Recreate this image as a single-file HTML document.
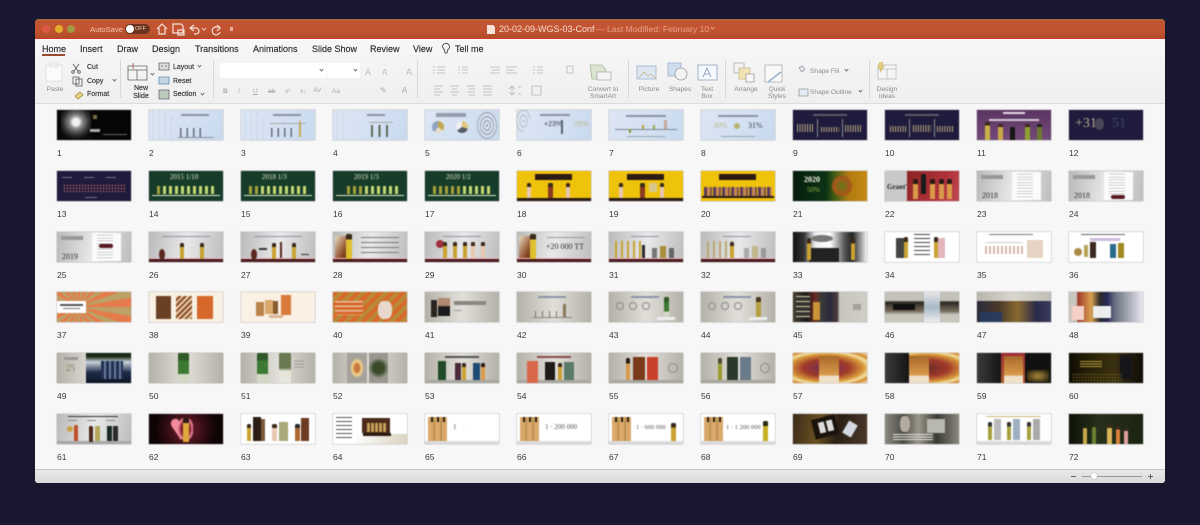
<!DOCTYPE html>
<html><head><meta charset="utf-8"><style>
*{box-sizing:border-box}
html,body{margin:0;padding:0;width:1200px;height:525px;overflow:hidden;background:#191630;font-family:"Liberation Sans",sans-serif}
#w{position:absolute;left:35px;top:19px;width:1130px;height:464px;background:#f7f7f7;border-radius:4px 4px 3px 3px;overflow:hidden}
#tb{position:absolute;left:0;top:0;width:100%;height:20px;background:linear-gradient(#b0703a 0,#bf5431 2px,#c55433 10px,#b04e29 19px);border-bottom:1px solid #d43a2a}
#rb{position:absolute;left:0;top:20px;width:100%;height:65px;background:linear-gradient(#f7f7f7,#efefef);border-bottom:1px solid #dcdcdc}
#sb{position:absolute;left:0;top:450px;width:100%;height:14px;background:linear-gradient(#e9e9e9,#d8d8d8);border-top:1px solid #c6c6c6}
.a{position:absolute;white-space:nowrap}
.tab{position:absolute;top:25px;font-size:9px;line-height:11px;color:#2a2a2a;white-space:nowrap;-webkit-text-stroke:.15px #2a2a2a}
.l{position:absolute;margin-top:1px;font-size:7px;line-height:8px;color:#333;white-space:nowrap;font-weight:400;-webkit-text-stroke:.15px #333}
.m{position:absolute;margin-top:1.5px;font-size:6.6px;line-height:7.6px;color:#8a8a8a;text-align:center;white-space:nowrap;transform:translateX(-50%)}
.n{position:absolute;margin-top:1.5px;font-size:6.6px;line-height:8px;color:#8a8a8a;white-space:nowrap}
.sp{position:absolute;top:41px;width:1px;height:38px;background:#d8d8d8}
.ch{position:absolute;width:3px;height:3px;border-right:1px solid #777;border-bottom:1px solid #777;transform:rotate(45deg)}
svg{position:absolute;overflow:visible}
#g{position:absolute;left:22px;top:91px;display:grid;grid-template-columns:repeat(12,74px);column-gap:18px;grid-auto-rows:60.8px}
.c{position:relative}
.c p{position:absolute;left:0;top:38px;margin:0;font-size:8.5px;line-height:11px;color:#3a3a3a}
.t{position:relative;width:74px;height:30px;overflow:hidden;box-shadow:0 0 0 .5px #bdbdbd;background:#ddd;filter:blur(.45px)}
.t i{position:absolute;display:block}
.t b{position:absolute;font-weight:400;white-space:nowrap;line-height:1}
.bl{background:linear-gradient(120deg,#dde6f4,#d2e0f2 60%,#c7d9ef)}
.nv{background:#1e1b3d}
.gr{background:#173d2a}
.ye{background:#efc20c}
.sl{background:linear-gradient(100deg,#b9b9b9,#e9e9e9 50%,#bdbdbd)}
.bg{background:linear-gradient(90deg,#b4b1a8,#e2dfda 50%,#b4b1a8)}
.wh{background:#fff}
.st{left:0;top:26px;width:74px;height:4px;background:#4a1a1f;border-top:1px solid #f0b9c4}
.bt{left:0;top:27px;width:74px;height:3px;background:#dcdcdc}
.cv{left:0;top:0;width:26px;height:30px;background:repeating-linear-gradient(90deg,transparent 0 4px,#b6c4d6 4px 4.6px,transparent 4.6px 6px);opacity:.8;border-radius:0 60% 0 0}
.ti{left:26px;top:4px;width:28px;height:1.5px;background:#8b93a5}
.b{width:3.5px;height:16px;top:9px;border-radius:1.5px 1.5px 0 0;background:linear-gradient(#3a2a1a 0 25%,#c9a232 25% 100%)}
.bg_{background:linear-gradient(#2e5a2a 0 25%,#3c7a33 25% 70%,#d3d8c4 70%)}
.bm{background:linear-gradient(#2a1a12 0 25%,#d99a4a 25% 100%)}
.bk{background:linear-gradient(#1a1a1a 0 100%)}
.bp{background:linear-gradient(#3a2a1a 0 25%,#e8c8b0 25% 100%)}
</style></head><body>
<div id="w">
<div id="tb">
<span class="a" style="left:7px;top:6px;width:8px;height:8px;border-radius:50%;background:#dc5a46"></span>
<span class="a" style="left:20px;top:6px;width:8px;height:8px;border-radius:50%;background:#e5ac2c"></span>
<span class="a" style="left:32px;top:6px;width:8px;height:8px;border-radius:50%;background:#9f9a40"></span>
<span class="a" style="left:55px;top:4.500px;font-size:7.6px;line-height:11px;color:#f0c4ae">AutoSave</span>
<span class="a" style="left:90px;top:5px;width:25px;height:10px;border-radius:5px;background:#6a3420"></span>
<span class="a" style="left:91px;top:6px;width:8px;height:8px;border-radius:50%;background:#fff"></span>
<span class="a" style="left:100px;top:7px;font-size:5.5px;line-height:6px;color:#f0d0c0">OFF</span>
<svg style="left:0;top:0" width="240" height="20" fill="none" stroke="#f6e3d9" stroke-width="1.2"><path d="M122 10l5-5 5 5M124 9v6h6V9"/><path d="M138 5h8l2 2v7h-10zM143 11h6v5h-6z"/><path d="M159 6l-4 3 4 3M155 9h6a3 3 0 0 1 0 6h-2"/><path d="M167 9l2 2 2-2" stroke-width=".8"/><path d="M182 6l3 3-3 3M185 8h-3a4 4 0 1 0 3 5"/><path d="M195 9h3M195 11h3"/></svg>
<svg style="left:0;top:0" width="470" height="20"><path d="M452 6h6l2 2v7h-8z" fill="#f6e3d9"/></svg>
<span class="a" style="left:464px;top:4px;font-size:9px;line-height:12px;color:#f5ddd0">20-02-09-WGS-03-Conf</span>
<span class="a" style="left:561px;top:4px;font-size:8.600px;line-height:12px;color:#e7a088">— Last Modified: February 10</span>
<span class="ch" style="left:676px;top:7px;border-color:#e7a088"></span>
</div>
<div id="rb"></div>
<span class="tab" style="left:7px">Home</span><span class="a" style="left:7px;top:35px;width:23px;height:1.5px;background:#9a4a30"></span>
<span class="tab" style="left:45px">Insert</span><span class="tab" style="left:82px">Draw</span><span class="tab" style="left:117px">Design</span><span class="tab" style="left:160px">Transitions</span><span class="tab" style="left:218px">Animations</span><span class="tab" style="left:277px">Slide Show</span><span class="tab" style="left:335px">Review</span><span class="tab" style="left:378px">View</span><span class="tab" style="left:420px">Tell me</span>
<svg style="left:0;top:0" width="1130" height="85" fill="none" stroke="#8d8d8d" stroke-width=".8">
<path d="M407.500 28a3.500 3.500 0 1 1 5 3l-.5 3h-2l-.5-3z" stroke="#333"/>
<path d="M11 46h16v16H11zM15 44h8v4h-8z" stroke="#d8d8d8" fill="#fbfbfb"/>
<path d="M38 45l5 7M44 45l-5 7" stroke="#555"/><circle cx="38" cy="53" r="1.300" stroke="#555"/><circle cx="44" cy="53" r="1.300" stroke="#555"/>
<path d="M38 58h6v7h-6zM41 60h6v7h-6z" stroke="#555"/><path d="M40 77l5-4 3 3-5 4z" stroke="#a5843a" fill="#e8d28a"/>
<path d="M93 47h19v14H93zM93 51h19M102 51v10" stroke="#666"/><path d="M98 44v6" stroke="#a5483a"/>
<path d="M124 44h10v7h-10zM126 47h2M130 47h2" stroke="#666" fill="#ddd"/><path d="M124 58h10v7h-10z" stroke="#6688aa" fill="#c8d6e2"/><path d="M124 71h10v9h-10z" stroke="#667" fill="#bccabb"/>
<path d="M398 48h2M402 48h8M398 51h2M402 51h8M398 54h2M402 54h8M423 48h2M427 48h6M423 51h2M427 51h6M423 54h2M427 54h6M455 48h10M457 51h8M455 54h10M471 48h11M471 51h8M471 54h11M498 48h2M502 48h6M498 51h2M502 51h6M498 54h2M502 54h6M532 47h6v7h-6z" stroke="#b5b5b5"/>
<path d="M399 67h9M399 70h6M399 73h9M399 76h6M415 67h9M417 70h5M415 73h9M417 76h5M432 67h8M434 70h6M432 73h8M434 76h6M448 67h9M448 70h9M448 73h9M448 76h9" stroke="#b5b5b5"/>
<path d="M477 67v9M474 70l3-3 3 3M474 73l3 3 3-3M483 68h3M483 75h3M497 67h9v9h-9z" stroke="#b5b5b5"/>
<path d="M555 46h12l4 5v9h-14z" stroke="#a9b99a" fill="#dbe4cf"/><path d="M562 53h14v8h-14z" stroke="#aaa" fill="#f4f4f4"/>
<path d="M602 47h19v13h-19z" stroke="#9ab1cc" fill="#dde7f2"/><path d="M604 59l5-6 4 4 3-2 5 5" stroke="#c7b790"/>
<path d="M633 44h13v13h-13z" stroke="#9ab1cc" fill="#cfdcf0"/><circle cx="646" cy="55" r="6" stroke="#999" fill="#f3f3f3"/>
<path d="M663 46h19v15h-19z" stroke="#8aa0bd" fill="#f5f8fc"/><path d="M668 58l4-9 4 9M669 55h6" stroke="#7e95b3"/>
<path d="M699 44h10v10h-10z" stroke="#aaa"/><path d="M704 49h11v11h-11z" stroke="#c9b58a" fill="#f3e4b6"/><path d="M711 55h8v8h-8z" stroke="#999" fill="#f7f7f7"/>
<path d="M730 46h17v17h-17z" stroke="#aaa" fill="#f8f8f8"/><path d="M733 63l13-10" stroke="#9ab1cc" stroke-width="1.600"/>
<path d="M764 49l3-2 3 3-3 3zM764 70h9v7h-9z" stroke="#999" fill="#e4ecf5"/>
<path d="M843 46h18v14h-18zM843 50h18M852 50v10" stroke="#bbb" fill="#f5f5f5"/><path d="M845 43l-2 6h3l-1 4 4-6h-3l2-4" stroke="#d3b75c" fill="#e9d58b"/>
</svg>
<span class="m" style="left:20px;top:65px">Paste</span>
<span class="l" style="left:52px;top:44px">Cut</span><span class="l" style="left:52px;top:58px">Copy</span><span class="ch" style="left:78px;top:59px"></span><span class="l" style="left:52px;top:71px">Format</span>
<span class="sp" style="left:85px"></span>
<span class="ch" style="left:116px;top:53px"></span>
<span class="l" style="left:106px;top:65px;transform:translateX(-50%)">New</span><span class="l" style="left:106px;top:73px;transform:translateX(-50%)">Slide</span>
<span class="l" style="left:138px;top:44px">Layout</span><span class="ch" style="left:163px;top:45px"></span><span class="l" style="left:138px;top:58px">Reset</span><span class="l" style="left:138px;top:71px">Section</span><span class="ch" style="left:166px;top:73px"></span>
<span class="sp" style="left:178px"></span>
<span class="a" style="left:185px;top:44px;width:106px;height:15px;background:#fff;border-radius:2px"></span><span class="ch" style="left:285px;top:49px"></span>
<span class="a" style="left:292px;top:44px;width:33px;height:15px;background:#fff;border-radius:2px"></span><span class="ch" style="left:319px;top:49px"></span>
<span class="n" style="left:330px;top:47px;font-size:9px;color:#bbb">A</span><span class="n" style="left:347px;top:48px;font-size:8px;color:#bbb">A</span><span class="n" style="left:371px;top:47px;font-size:9px;color:#bbb">A</span>
<span class="n" style="left:188px;top:67px;color:#aaa;font-weight:700">B</span><span class="n" style="left:203px;top:67px;color:#aaa;font-style:italic">I</span><span class="n" style="left:218px;top:67px;color:#aaa;text-decoration:underline">U</span><span class="n" style="left:233px;top:67px;color:#aaa;text-decoration:line-through">ab</span><span class="n" style="left:250px;top:67px;color:#aaa">x²</span><span class="n" style="left:265px;top:67px;color:#aaa">x₂</span><span class="n" style="left:278px;top:66px;color:#aaa">AV</span><span class="n" style="left:297px;top:67px;color:#aaa">Aa</span><span class="n" style="left:345px;top:66px;color:#aaa;font-size:8px">✎</span><span class="n" style="left:367px;top:66px;color:#aaa;font-size:8px">A</span>
<span class="sp" style="left:382px"></span><span class="sp" style="left:593px"></span><span class="sp" style="left:690px"></span><span class="sp" style="left:834px"></span>
<span class="m" style="left:568px;top:65px">Convert to<br>SmartArt</span>
<span class="m" style="left:614px;top:65px">Picture</span><span class="m" style="left:645px;top:65px">Shapes</span><span class="m" style="left:672px;top:65px">Text<br>Box</span>
<span class="m" style="left:711px;top:65px">Arrange</span><span class="m" style="left:742px;top:65px">Quick<br>Styles</span>
<span class="n" style="left:775px;top:47px">Shape Fill</span><span class="ch" style="left:810px;top:49px"></span><span class="n" style="left:775px;top:68px">Shape Outline</span><span class="ch" style="left:824px;top:70px"></span>
<span class="m" style="left:852px;top:65px">Design<br>Ideas</span>
<div id="g">
<div class="c"><div class="t" style="background:#060606"><i style="left:4px;top:0;width:30px;height:30px;background:radial-gradient(circle at 50% 40%,#f2f2f2 0 14%,#888 28%,#333 55%,#0a0a0a 75%)"></i><i style="left:36px;top:5px;width:4px;height:4px;background:#7a6a4a"></i><i style="left:33px;top:19px;width:10px;height:3px;background:#aaa"></i><i style="left:46px;top:24px;width:24px;height:1px;background:#666"></i></div><p>1</p></div>
<div class="c"><div class="t bl"><i class="cv"></i><i class="ti" style="left:32px"></i><i style="left:31px;top:18px;width:24px;height:9px;background:repeating-linear-gradient(90deg,#666d79 0 1.500px,transparent 1.500px 6.500px)"></i><i style="left:29px;top:27px;width:36px;height:.6px;background:#8a90a0"></i></div><p>2</p></div>
<div class="c"><div class="t bl"><i class="cv"></i><i class="ti" style="left:32px"></i><i style="left:30px;top:18px;width:26px;height:9px;background:repeating-linear-gradient(90deg,#666d79 0 1.500px,transparent 1.500px 6.500px)"></i><i style="left:58px;top:11px;width:2px;height:16px;background:#c0ab58"></i><i style="left:29px;top:13px;width:36px;height:.6px;background:#aaa"></i></div><p>3</p></div>
<div class="c"><div class="t bl"><i class="cv" style="width:16px"></i><i class="ti" style="left:34px;width:18px"></i><i style="left:38px;top:15px;width:20px;height:12px;background:repeating-linear-gradient(90deg,#5c6a58 0 2px,transparent 2px 7.500px)"></i><i style="left:36px;top:12px;width:24px;height:.6px;background:#aaa"></i></div><p>4</p></div>
<div class="c"><div class="t bl"><i style="left:7px;top:11px;width:12px;height:12px;border-radius:50%;background:conic-gradient(#c2a94f 0 35%,#e5e0c8 35% 60%,#8ea3bf 60%)"></i><i style="left:31px;top:11px;width:12px;height:12px;border-radius:50%;background:conic-gradient(#e0c77c 0 30%,#555d68 30% 65%,#eee 65%)"></i><i style="left:11px;top:3px;width:30px;height:4px;background:#969cab"></i><i style="left:52px;top:2px;width:20px;height:27px;border-radius:50%;background:repeating-radial-gradient(#9ca6b5 0 1px,#d6e0ee 1px 3px)"></i></div><p>5</p></div>
<div class="c"><div class="t bl"><i style="left:0;top:0;width:13px;height:22px;border-radius:0 0 60% 0;background:repeating-radial-gradient(#bcc6d4 0 1px,#dbe4f0 1px 3px)"></i><b style="left:27px;top:11px;font-size:7px;color:#3a4252">+23%</b><b style="left:55px;top:11px;font-size:7px;color:#b6b98a">·26%</b><i style="left:44px;top:10px;width:1.500px;height:14px;background:#5a6472"></i><i style="left:23px;top:4px;width:30px;height:1.500px;background:#8b93a5"></i></div><p>6</p></div>
<div class="c"><div class="t bl"><i class="ti" style="left:17px;width:40px;top:5px"></i><i style="left:6px;top:19px;width:62px;height:.7px;background:#7a8a9a"></i><i style="left:20px;top:19px;width:2px;height:4px;background:#8a9a30"></i><i style="left:33px;top:15px;width:2px;height:4px;background:#b8a040"></i><i style="left:44px;top:15px;width:2px;height:4px;background:#9aaa40"></i><i style="left:55px;top:10px;width:3px;height:9px;background:#c9a79a"></i><i style="left:18px;top:26px;width:38px;height:.6px;background:#9aa"></i></div><p>7</p></div>
<div class="c"><div class="t bl"><i class="ti" style="left:17px;width:40px;top:5px"></i><b style="left:12px;top:12px;font-size:8px;font-family:'Liberation Serif',serif;color:#bdb986">30%</b><b style="left:47px;top:12px;font-size:8px;font-family:'Liberation Serif',serif;color:#3a4252">31%</b><i style="left:33px;top:13px;width:6px;height:6px;background:#b8b272;border-radius:50%"></i><i style="left:20px;top:26px;width:34px;height:.6px;background:#9aa"></i></div><p>8</p></div>
<div class="c"><div class="t nv"><i class="ti" style="left:20px;width:34px;top:4px;background:#5c5866"></i><i style="left:4px;top:14px;width:16px;height:8px;background:repeating-linear-gradient(90deg,#b8a478 0 1px,transparent 1px 2.500px)"></i><i style="left:28px;top:17px;width:18px;height:5px;background:repeating-linear-gradient(90deg,#b8a478 0 1px,transparent 1px 2.500px)"></i><i style="left:52px;top:15px;width:17px;height:7px;background:repeating-linear-gradient(90deg,#b8a478 0 1px,transparent 1px 2.500px)"></i><i style="left:24px;top:9px;width:.6px;height:18px;background:#888"></i><i style="left:49px;top:9px;width:.6px;height:18px;background:#888"></i></div><p>9</p></div>
<div class="c"><div class="t nv"><i class="ti" style="left:20px;width:34px;top:4px;background:#5c5866"></i><i style="left:5px;top:16px;width:16px;height:6px;background:repeating-linear-gradient(90deg,#b8a478 0 1px,transparent 1px 2.500px)"></i><i style="left:28px;top:15px;width:18px;height:7px;background:repeating-linear-gradient(90deg,#b8a478 0 1px,transparent 1px 2.500px)"></i><i style="left:52px;top:16px;width:17px;height:6px;background:repeating-linear-gradient(90deg,#b8a478 0 1px,transparent 1px 2.500px)"></i><i style="left:24px;top:9px;width:.6px;height:18px;background:#888"></i><i style="left:49px;top:9px;width:.6px;height:18px;background:#888"></i></div><p>10</p></div>
<div class="c"><div class="t" style="background:linear-gradient(#5a3560,#744a7a)"><i style="left:26px;top:2px;width:22px;height:2px;background:#e5d9e6"></i><i style="left:12px;top:9px;width:50px;height:1.500px;background:#d5c8d8"></i><i class="b" style="left:8px;top:12px;width:5px;height:18px;background:linear-gradient(#3a2a1a 0 20%,#c9b24a 20%)"></i><i class="b" style="left:21px;top:14px;width:5px;height:16px;background:linear-gradient(#3a2a1a 0 20%,#c9a94a 20%)"></i><i class="b" style="left:33px;top:17px;width:5px;height:13px;background:#161616"></i><i class="b" style="left:48px;top:14px;width:5px;height:16px;background:linear-gradient(#3a2a1a 0 20%,#8fa030 20%)"></i><i class="b" style="left:60px;top:14px;width:5px;height:16px;background:linear-gradient(#222 0 20%,#6c7a30 20%)"></i></div><p>11</p></div>
<div class="c"><div class="t nv"><b style="left:6px;top:7px;font-size:14px;font-family:'Liberation Serif',serif;color:#b8ad8c">+31</b><b style="left:43px;top:7px;font-size:14px;font-family:'Liberation Serif',serif;color:#44436a">51</b><i style="left:26px;top:8px;width:9px;height:12px;border-radius:50%;background:#4a4658"></i></div><p>12</p></div>
<div class="c"><div class="t nv"><i style="left:5px;top:6px;width:62px;height:1px;background:repeating-linear-gradient(90deg,#77708a 0 10px,transparent 10px 22px)"></i><i style="left:6px;top:13px;width:62px;height:8px;background:radial-gradient(#b8665a .6px,transparent 1px) 0 0/3px 3px"></i><i style="left:28px;top:26px;width:12px;height:1px;background:#77708a"></i></div><p>13</p></div>
<div class="c"><div class="t gr"><b style="left:21px;top:3px;font-size:7px;font-family:'Liberation Serif',serif;color:#dfe6c8">2015 1/10</b><i style="left:8px;top:15px;width:58px;height:8px;background:repeating-linear-gradient(90deg,#c4d972 0 3px,transparent 3px 6px)"></i><i style="left:8px;top:15px;width:3px;height:8px;background:#a5a03a"></i><i style="left:3px;top:24px;width:68px;height:1.500px;background:#dce8c8"></i></div><p>14</p></div>
<div class="c"><div class="t gr"><b style="left:21px;top:3px;font-size:7px;font-family:'Liberation Serif',serif;color:#dfe6c8">2018 1/3</b><i style="left:8px;top:15px;width:58px;height:8px;background:repeating-linear-gradient(90deg,#c4d972 0 3px,transparent 3px 6px)"></i><i style="left:8px;top:15px;width:9px;height:8px;background:repeating-linear-gradient(90deg,#a5a03a 0 3px,#173d2a 3px 6px)"></i><i style="left:3px;top:24px;width:68px;height:1.500px;background:#dce8c8"></i></div><p>15</p></div>
<div class="c"><div class="t gr"><b style="left:21px;top:3px;font-size:7px;font-family:'Liberation Serif',serif;color:#dfe6c8">2019 1/3</b><i style="left:14px;top:15px;width:52px;height:8px;background:repeating-linear-gradient(90deg,#c4d972 0 3px,transparent 3px 6px)"></i><i style="left:14px;top:15px;width:15px;height:8px;background:repeating-linear-gradient(90deg,#a5a03a 0 3px,#173d2a 3px 6px)"></i><i style="left:3px;top:24px;width:68px;height:1.500px;background:#dce8c8"></i></div><p>16</p></div>
<div class="c"><div class="t gr"><b style="left:21px;top:3px;font-size:7px;font-family:'Liberation Serif',serif;color:#dfe6c8">2020 1/2</b><i style="left:8px;top:15px;width:58px;height:8px;background:repeating-linear-gradient(90deg,#c4d972 0 3px,transparent 3px 6px)"></i><i style="left:8px;top:15px;width:27px;height:8px;background:repeating-linear-gradient(90deg,#a5a03a 0 3px,#173d2a 3px 6px)"></i><i style="left:3px;top:24px;width:68px;height:1.500px;background:#dce8c8"></i></div><p>17</p></div>
<div class="c"><div class="t ye"><i style="left:18px;top:3px;width:37px;height:6px;background:#2c1a14"></i><i class="b bp" style="left:10px;top:12px"></i><i class="b bm" style="left:31px;top:12px;width:5px;background:linear-gradient(#3a2a1a 0 25%,#8a3a20 25%)"></i><i class="b bp" style="left:49px;top:12px"></i><i style="left:0;top:27px;width:74px;height:3px;background:#2c1a14"></i></div><p>18</p></div>
<div class="c"><div class="t ye"><i style="left:18px;top:3px;width:37px;height:6px;background:#2c1a14"></i><i class="b bp" style="left:10px;top:12px"></i><i class="b bm" style="left:31px;top:12px;width:5px;background:linear-gradient(#3a2a1a 0 25%,#8a3a20 25%)"></i><i style="left:40px;top:12px;width:8px;height:9px;background:#d9c88a"></i><i class="b bp" style="left:51px;top:12px"></i><i style="left:0;top:27px;width:74px;height:3px;background:#2c1a14"></i></div><p>19</p></div>
<div class="c"><div class="t ye"><i style="left:18px;top:3px;width:37px;height:6px;background:#2c1a14"></i><i style="left:3px;top:16px;width:68px;height:9px;background:repeating-linear-gradient(90deg,#5c3a5a 0 3px,#c48a50 3px 6px,#7a5048 6px 8px,#efc20c 8px 9px)"></i><i style="left:1px;top:25px;width:72px;height:2px;background:#2c1a14"></i></div><p>20</p></div>
<div class="c"><div class="t" style="background:linear-gradient(90deg,#071d0e,#0c3315 45%,#3a5a15 55%,#b07a10 75%,#c68812)"><b style="left:11px;top:5px;font-size:8px;font-family:'Liberation Serif',serif;color:#f5f5e8;font-weight:700">2020</b><b style="left:14px;top:16px;font-size:7px;font-family:'Liberation Serif',serif;color:#9fb83a">50%</b><i style="left:38px;top:5px;width:22px;height:20px;border-radius:40%;background:radial-gradient(circle,#6a7a1a,#a8551a 60%,transparent 75%)"></i></div><p>21</p></div>
<div class="c"><div class="t" style="background:#c9c9c9"><b style="left:2px;top:13px;font-size:7px;font-family:'Liberation Serif',serif;color:#222;font-weight:700">Grant's</b><i style="left:22px;top:0;width:52px;height:30px;background:linear-gradient(120deg,#8a2424,#b0303a 60%,#c14a52)"></i><i class="b bm" style="left:28px;top:8px;height:20px;width:5px"></i><i class="b bk" style="left:36px;top:3px;height:20px;width:5px"></i><i class="b bm" style="left:45px;top:8px;height:20px;width:5px"></i><i class="b bm" style="left:54px;top:8px;height:20px;width:5px"></i><i class="b bm" style="left:62px;top:8px;height:20px;width:5px"></i></div><p>22</p></div>
<div class="c"><div class="t sl"><i style="left:35px;top:1px;width:29px;height:28px;background:#fbfbfb"></i><i style="left:40px;top:3px;width:16px;height:24px;background:repeating-linear-gradient(#999 0 .5px,#fff .5px 2.800px)"></i><i style="left:4px;top:4px;width:22px;height:4px;background:#999"></i><b style="left:5px;top:21px;font-size:8px;font-family:'Liberation Serif',serif;color:#333">2018</b></div><p>23</p></div>
<div class="c"><div class="t sl"><i style="left:35px;top:1px;width:29px;height:28px;background:#fbfbfb"></i><i style="left:40px;top:3px;width:16px;height:24px;background:repeating-linear-gradient(#999 0 .5px,#fff .5px 2.800px)"></i><i style="left:42px;top:24px;width:14px;height:4px;background:#5a1a24;border-radius:2px"></i><i style="left:4px;top:4px;width:22px;height:4px;background:#999"></i><b style="left:5px;top:21px;font-size:8px;font-family:'Liberation Serif',serif;color:#333">2018</b></div><p>24</p></div>
<div class="c"><div class="t sl"><i style="left:35px;top:1px;width:29px;height:28px;background:#fbfbfb"></i><i style="left:40px;top:3px;width:16px;height:24px;background:repeating-linear-gradient(#999 0 .5px,#fff .5px 2.800px)"></i><i style="left:42px;top:12px;width:14px;height:4px;background:#5a1a24;border-radius:2px"></i><i style="left:4px;top:4px;width:22px;height:4px;background:#999"></i><b style="left:5px;top:21px;font-size:8px;font-family:'Liberation Serif',serif;color:#333">2019</b></div><p>25</p></div>
<div class="c"><div class="t sl"><i class="ti" style="left:13px;width:48px"></i><i class="st"></i><i style="left:10px;top:17px;width:6px;height:11px;border-radius:50%;background:#5a2820"></i><i class="b" style="left:31px;top:11px;height:16px"></i><i class="b" style="left:51px;top:11px;height:16px"></i></div><p>26</p></div>
<div class="c"><div class="t sl"><i class="ti" style="left:13px;width:48px"></i><i class="st"></i><i style="left:10px;top:17px;width:6px;height:11px;border-radius:50%;background:#5a2820"></i><i class="b" style="left:31px;top:11px;height:16px"></i><i class="b" style="left:51px;top:11px;height:16px"></i><i style="left:39px;top:10px;width:2px;height:16px;background:#5a2820"></i><i style="left:18px;top:16px;width:8px;height:2px;background:#333"></i><i style="left:60px;top:22px;width:8px;height:1.500px;background:#333"></i></div><p>27</p></div>
<div class="c"><div class="t sl"><i class="st"></i><i style="left:2px;top:4px;width:17px;height:22px;background:linear-gradient(120deg,#eadbc4,#8a4a24 60%,#5a2a18)"></i><i class="b" style="left:13px;top:2px;width:6px;height:25px;background:linear-gradient(#3a2a1a 0 22%,#e0c030 22%)"></i><i style="left:28px;top:5px;width:38px;height:16px;background:repeating-linear-gradient(#7a7a7a 0 1px,transparent 1px 5px)"></i></div><p>28</p></div>
<div class="c"><div class="t sl"><i class="ti" style="left:18px;width:38px"></i><i class="st"></i><i style="left:11px;top:8px;width:8px;height:8px;border-radius:50%;background:#a03040"></i><i class="b" style="left:18px;top:10px"></i><i class="b" style="left:28px;top:10px"></i><i class="b" style="left:38px;top:10px"></i><i class="b bp" style="left:46px;top:10px"></i><i class="b bp" style="left:56px;top:10px"></i></div><p>29</p></div>
<div class="c"><div class="t sl"><i class="st"></i><i style="left:2px;top:4px;width:17px;height:22px;background:linear-gradient(120deg,#eadbc4,#8a4a24 60%,#5a2a18)"></i><i class="b" style="left:13px;top:2px;width:6px;height:25px;background:linear-gradient(#3a2a1a 0 22%,#e0c030 22%)"></i><b style="left:29px;top:11px;font-size:8px;font-family:'Liberation Serif',serif;color:#333">+20 000 TT</b><i style="left:30px;top:5px;width:38px;height:1.500px;background:#999"></i></div><p>30</p></div>
<div class="c"><div class="t sl"><i class="ti" style="left:22px"></i><i class="st"></i><i style="left:6px;top:9px;width:30px;height:17px;background:repeating-linear-gradient(90deg,#c9a232 0 2px,transparent 2px 6px)"></i><i style="left:33px;top:13px;width:3px;height:13px;background:#2a2a2a"></i><i style="left:43px;top:16px;width:5px;height:10px;background:#777"></i><i style="left:51px;top:14px;width:6px;height:12px;background:#a98e3c"></i><i style="left:60px;top:16px;width:5px;height:10px;background:#666"></i></div><p>31</p></div>
<div class="c"><div class="t sl"><i class="ti" style="left:22px"></i><i class="st"></i><i style="left:6px;top:9px;width:27px;height:17px;background:repeating-linear-gradient(90deg,#bba772 0 2px,transparent 2px 6px)"></i><i class="b" style="left:29px;top:10px"></i><i style="left:43px;top:16px;width:5px;height:10px;background:#aaa"></i><i style="left:51px;top:14px;width:6px;height:12px;background:#c4b68c"></i><i style="left:60px;top:16px;width:5px;height:10px;background:#999"></i></div><p>32</p></div>
<div class="c"><div class="t" style="background:linear-gradient(90deg,#111,#333 15%,#eee 30%,#fff 50%,#555 70%,#222 80%,#f5f5f5)"><i style="left:16px;top:16px;width:30px;height:14px;background:#222"></i><i class="b" style="left:14px;top:6px;height:22px;width:4px"></i><i class="b" style="left:58px;top:6px;height:22px;width:4px"></i><i style="left:18px;top:3px;width:22px;height:7px;background:#777;border-radius:50%"></i></div><p>33</p></div>
<div class="c"><div class="t wh"><i style="left:11px;top:6px;width:8px;height:20px;background:#444"></i><i class="b" style="left:19px;top:5px;height:21px"></i><i style="left:29px;top:2px;width:16px;height:24px;background:repeating-linear-gradient(#444 0 .8px,transparent .8px 4px)"></i><i class="b" style="left:49px;top:5px;height:21px"></i><i style="left:53px;top:6px;width:7px;height:20px;background:#e3b5bd"></i></div><p>34</p></div>
<div class="c"><div class="t wh"><i class="ti" style="left:12px;width:44px;top:2px;background:#777"></i><i style="left:8px;top:14px;width:38px;height:8px;background:repeating-linear-gradient(90deg,#d9b5a9 0 2px,transparent 2px 4px)"></i><i style="left:50px;top:8px;width:16px;height:18px;background:#e6d3c3"></i><i style="left:8px;top:10px;width:38px;height:1px;background:#ccc"></i></div><p>35</p></div>
<div class="c"><div class="t wh"><i class="ti" style="left:12px;width:44px;top:2px;background:#666"></i><i style="left:5px;top:16px;width:8px;height:8px;border-radius:50%;background:#a98a4a"></i><i style="left:15px;top:13px;width:4px;height:12px;background:#b4a45a"></i><i style="left:21px;top:10px;width:6px;height:16px;background:#3a2a20"></i><i style="left:41px;top:12px;width:6px;height:14px;background:#2a6a8a"></i><i style="left:49px;top:11px;width:6px;height:15px;background:#a08a20"></i><i style="left:21px;top:6px;width:30px;height:3px;background:#cbd"></i></div><p>36</p></div>
<div class="c"><div class="t" style="background:repeating-conic-gradient(from 0deg at 28% 50%,#e57a4a 0 10deg,#bca065 10deg 20deg)"><i style="left:0;top:9px;width:29px;height:12px;background:#fff"></i><i style="left:3px;top:12px;width:23px;height:1.500px;background:#555"></i><i style="left:6px;top:16px;width:17px;height:1px;background:#777"></i></div><p>37</p></div>
<div class="c"><div class="t" style="background:#f7f0e3"><i style="left:7px;top:4px;width:15px;height:23px;background:#6a4024"></i><i style="left:27px;top:4px;width:16px;height:23px;background:repeating-linear-gradient(135deg,#e4cba8 0 2px,#8a4a24 2px 4px)"></i><i style="left:48px;top:4px;width:16px;height:23px;background:#d5682a"></i></div><p>38</p></div>
<div class="c"><div class="t" style="background:#fbf0e4"><i style="left:15px;top:10px;width:8px;height:14px;background:#b9834a"></i><i style="left:24px;top:8px;width:8px;height:14px;background:#d9a86a"></i><i style="left:32px;top:9px;width:5px;height:13px;background:#8a5a30"></i><i style="left:40px;top:3px;width:10px;height:20px;background:#d97a3a"></i><i style="left:28px;top:23px;width:14px;height:3px;background:#d9b596"></i></div><p>39</p></div>
<div class="c"><div class="t" style="background:repeating-linear-gradient(135deg,#d9682a 0 4px,#b88a38 4px 8px)"><i style="left:2px;top:9px;width:28px;height:14px;background:repeating-linear-gradient(#e6bfa0 0 1.500px,#d9682a 1.500px 4.500px)"></i><i style="left:45px;top:9px;width:14px;height:18px;background:#e8d8cc;border-radius:40%"></i></div><p>40</p></div>
<div class="c"><div class="t bg"><i style="left:6px;top:8px;width:6px;height:17px;background:#2a2520"></i><i style="left:13px;top:6px;width:12px;height:18px;background:linear-gradient(#b08a70 40%,#1a1a1a 50%)"></i><i style="left:29px;top:9px;width:32px;height:4px;background:#8a8880"></i><i style="left:29px;top:18px;width:8px;height:1px;background:#999"></i></div><p>41</p></div>
<div class="c"><div class="t bg"><i class="ti" style="left:21px"></i><i style="left:18px;top:19px;width:22px;height:6px;background:repeating-linear-gradient(90deg,#776 0 1px,transparent 1px 7px)"></i><i style="left:46px;top:12px;width:3px;height:13px;background:#8a7a5a"></i><i style="left:15px;top:25px;width:40px;height:.6px;background:#888"></i></div><p>42</p></div>
<div class="c"><div class="t bg"><i class="ti" style="left:22px"></i><i style="left:7px;top:10px;width:8px;height:8px;border:.6px solid #888;border-radius:50%"></i><i style="left:20px;top:10px;width:8px;height:8px;border:.6px solid #888;border-radius:50%"></i><i style="left:33px;top:10px;width:8px;height:8px;border:.6px solid #888;border-radius:50%"></i><i class="b bg_" style="left:55px;top:5px;height:21px;width:5px"></i><i style="left:48px;top:25px;width:18px;height:3px;background:#eee"></i></div><p>43</p></div>
<div class="c"><div class="t bg"><i class="ti" style="left:22px"></i><i style="left:7px;top:10px;width:8px;height:8px;border:.6px solid #888;border-radius:50%"></i><i style="left:20px;top:10px;width:8px;height:8px;border:.6px solid #888;border-radius:50%"></i><i style="left:33px;top:10px;width:8px;height:8px;border:.6px solid #888;border-radius:50%"></i><i class="b" style="left:55px;top:5px;height:21px;width:5px;background:linear-gradient(#4a3a20 0 25%,#b4a040 25%)"></i><i style="left:48px;top:25px;width:18px;height:3px;background:#eee"></i></div><p>44</p></div>
<div class="c"><div class="t" style="background:linear-gradient(90deg,#4a4030,#1a1a1a 18%,#6a2a20 30%,#3a3a3a 38%,#2a2a3a 50%,#4a3a3a 60%,#c9c6be 63%,#cfcdc6)"><i style="left:20px;top:10px;width:7px;height:18px;background:#c9933a"></i><i style="left:3px;top:4px;width:14px;height:22px;background:repeating-linear-gradient(#d9d0a0 0 1px,#333 1px 5px)"></i><i style="left:60px;top:12px;width:8px;height:6px;background:#a5a29a"></i></div><p>45</p></div>
<div class="c"><div class="t" style="background:linear-gradient(#c5c2ba 28%,#2a2620 34%,#7a7060 65%,#c9c6be 75%)"><i style="left:39px;top:0;width:16px;height:30px;background:linear-gradient(#e8e8e8,#a8b8c8,#eee)"></i><i style="left:8px;top:12px;width:22px;height:6px;background:#10100e"></i></div><p>46</p></div>
<div class="c"><div class="t" style="background:linear-gradient(90deg,#2a2a3a,#4a3a2a 30%,#8a6a30 55%,#2a2a4a 80%,#3a3a5a)"><i style="left:0;top:0;width:74px;height:9px;background:linear-gradient(90deg,#b8b5ad,#d9d6ce,#c0bdb5)"></i><i style="left:3px;top:20px;width:22px;height:10px;background:#2a3a5a"></i></div><p>47</p></div>
<div class="c"><div class="t" style="background:linear-gradient(90deg,#c9c6be 10%,#a03a2a 12%,#d9a050 30%,#2a2a2a 42%,#2a2a5a 52%,#6a7080 62%,#e8e8f0)"><i style="left:3px;top:14px;width:12px;height:14px;background:#f5d0c8"></i><i style="left:24px;top:14px;width:18px;height:12px;background:#eee"></i></div><p>48</p></div>
<div class="c"><div class="t bg"><b style="left:9px;top:11px;font-size:9px;font-family:'Liberation Serif',serif;color:#8a7a5a">25</b><i style="left:7px;top:4px;width:14px;height:3px;background:#999"></i><i style="left:29px;top:0;width:45px;height:30px;background:linear-gradient(#1a2a18 0 12%,#c9d2dc 30%,#1c2a4a 65%,#0e1622)"></i><i style="left:44px;top:8px;width:22px;height:18px;background:repeating-linear-gradient(90deg,#203050 0 3px,#6a7a9a 3px 5px)"></i></div><p>49</p></div>
<div class="c"><div class="t bg"><i class="b bg_" style="left:29px;top:0;width:11px;height:30px"></i></div><p>50</p></div>
<div class="c"><div class="t bg"><i class="b bg_" style="left:16px;top:0;width:11px;height:30px"></i><i class="b" style="left:38px;top:0;width:12px;height:30px;background:linear-gradient(#6a7a50 0 50%,#e6e6da 60%)"></i><i style="left:53px;top:8px;width:10px;height:8px;background:repeating-linear-gradient(#777 0 .5px,transparent .5px 3px)"></i></div><p>51</p></div>
<div class="c"><div class="t bg"><i style="left:14px;top:0;width:20px;height:30px;background:radial-gradient(ellipse,#c9783a 18%,#f3d48a 32%,#a5a29a 50%)"></i><i style="left:36px;top:0;width:19px;height:30px;background:radial-gradient(circle,#3a4a2a 30%,#9a988e 58%)"></i></div><p>52</p></div>
<div class="c"><div class="t bg"><i class="ti" style="left:20px;width:34px;top:3px;background:#555"></i><i class="bt" style="background:#a8a8a0"></i><i style="left:13px;top:8px;width:8px;height:19px;background:#1f4a25"></i><i style="left:30px;top:10px;width:6px;height:17px;background:#4a2a3a"></i><i class="b" style="left:37px;top:10px;height:17px"></i><i style="left:48px;top:10px;width:7px;height:17px;background:#1c4a70"></i><i class="b bm" style="left:56px;top:10px;height:17px"></i></div><p>53</p></div>
<div class="c"><div class="t bg"><i class="ti" style="left:20px;width:34px;top:3px;background:#8a4a4a"></i><i class="bt" style="background:#a8a8a0"></i><i style="left:10px;top:8px;width:11px;height:22px;background:#d9684a"></i><i style="left:28px;top:9px;width:10px;height:18px;background:#1e1a18"></i><i class="b" style="left:41px;top:10px;height:17px"></i><i style="left:47px;top:9px;width:10px;height:18px;background:#5a7a6a"></i></div><p>54</p></div>
<div class="c"><div class="t bg"><i class="bt" style="background:#a8a8a0"></i><i class="b bm" style="left:17px;top:5px;height:22px;width:4px"></i><i style="left:24px;top:4px;width:12px;height:23px;background:#7a3a1a"></i><i style="left:38px;top:4px;width:11px;height:23px;background:#c9402a"></i><i style="left:59px;top:10px;width:10px;height:10px;border-radius:50%;border:.7px solid #888"></i></div><p>55</p></div>
<div class="c"><div class="t bg"><i class="bt" style="background:#a8a8a0"></i><i class="b" style="left:17px;top:5px;height:22px;width:4px;background:linear-gradient(#4a4a30 0 25%,#9a9a30 25%)"></i><i style="left:26px;top:4px;width:11px;height:23px;background:#2a3a2a"></i><i style="left:39px;top:4px;width:11px;height:23px;background:#6a7a8a"></i><i style="left:59px;top:10px;width:10px;height:10px;border-radius:50%;border:.7px solid #888"></i></div><p>56</p></div>
<div class="c"><div class="t" style="background:radial-gradient(ellipse at 45% 50%,#6a2a5a 0,#a03a2a 40%,#d99a3a 65%,#f3e3a8 75%,#d58a30 85%,#f0e4b8)"><i style="left:26px;top:3px;width:20px;height:27px;background:linear-gradient(#a86a2a,#d99a4a 70%,#efe0c8 75%)"></i></div><p>57</p></div>
<div class="c"><div class="t" style="background:radial-gradient(ellipse at 55% 50%,#6a2a2a 0,#a03a2a 40%,#d99a3a 65%,#f3e3a8 75%,#d58a30 85%,#f0e4b8)"><i style="left:0;top:0;width:24px;height:30px;background:linear-gradient(90deg,#3a3a3a,#151515)"></i><i style="left:24px;top:3px;width:20px;height:27px;background:linear-gradient(#a86a2a,#d99a4a 70%,#efe0c8 75%)"></i></div><p>58</p></div>
<div class="c"><div class="t" style="background:#111"><i style="left:0;top:0;width:24px;height:30px;background:linear-gradient(90deg,#3a3a3a,#151515)"></i><i style="left:24px;top:0;width:24px;height:30px;background:linear-gradient(#a02a3a,#b05a2a)"></i><i style="left:27px;top:3px;width:19px;height:27px;background:linear-gradient(#a86a2a,#d99a4a 70%,#efe0c8 75%)"></i><i style="left:50px;top:17px;width:22px;height:12px;background:radial-gradient(#a58a3a,#1a1408)"></i></div><p>59</p></div>
<div class="c"><div class="t" style="background:linear-gradient(90deg,#0e0b04,#2a2208 30%,#3a3010 60%,#0e0c08)"><i style="left:11px;top:8px;width:22px;height:6px;background:repeating-linear-gradient(#b59a40 0 1px,transparent 1px 2.500px)"></i><i style="left:51px;top:2px;width:12px;height:24px;background:#15151a"></i><i style="left:3px;top:20px;width:50px;height:8px;background:radial-gradient(#6a5a20 .6px,transparent 1px) 0 0/3px 3px"></i></div><p>60</p></div>
<div class="c"><div class="t sl"><i class="bt" style="background:#a8a8a8"></i><i style="left:11px;top:2px;width:50px;height:1.500px;background:#333"></i><i style="left:11px;top:6px;width:52px;height:1px;background:repeating-linear-gradient(90deg,#888 0 9px,transparent 9px 19px)"></i><i style="left:10px;top:12px;width:6px;height:6px;border-radius:50%;background:#c9a24a"></i><i class="b" style="left:17px;top:11px;width:4px;background:#c0502a"></i><i class="b bk" style="left:32px;top:12px;background:#4a2a1a"></i><i style="left:38px;top:12px;width:5px;height:15px;background:#b5a85a"></i><i style="left:50px;top:12px;width:5px;height:15px;background:#1a2a22"></i><i style="left:56px;top:12px;width:5px;height:15px;background:#2a2a2a"></i></div><p>61</p></div>
<div class="c"><div class="t" style="background:radial-gradient(ellipse 42% 100% at 50% 50%,#7a2030,#2a0a10 70%,#0e0404)"><b style="left:20px;top:-5px;font-size:38px;color:#f08a9a;line-height:1">♥</b><i style="left:29px;top:4px;width:15px;height:22px;border-radius:6px;background:radial-gradient(#7a1a2a 40%,#f08a9a 70%,transparent 80%)"></i><i class="b" style="left:34px;top:4px;width:6px;height:24px;background:linear-gradient(#2a1a10 0 20%,#e0a93a 20%)"></i></div><p>62</p></div>
<div class="c"><div class="t wh"><i class="b" style="left:6px;top:10px;height:17px;width:4px"></i><i style="left:12px;top:3px;width:8px;height:24px;background:#2a1c14"></i><i style="left:20px;top:5px;width:4px;height:22px;background:#7a5a3a"></i><i class="b bp" style="left:31px;top:10px;height:17px;width:5px"></i><i style="left:38px;top:8px;width:9px;height:19px;background:#a8a878"></i><i class="b" style="left:54px;top:10px;height:17px;width:5px;background:linear-gradient(#2a2a2a 0 25%,#b06a30 25%)"></i><i style="left:60px;top:4px;width:8px;height:23px;background:#6a3a22"></i></div><p>63</p></div>
<div class="c"><div class="t wh"><i style="left:3px;top:3px;width:16px;height:22px;background:repeating-linear-gradient(#555 0 1px,transparent 1px 4px)"></i><i style="left:29px;top:4px;width:28px;height:15px;background:#4a2a1a"></i><i style="left:34px;top:9px;width:19px;height:9px;background:repeating-linear-gradient(90deg,#c9a25a 0 3px,#3a1a10 3px 4px)"></i><i style="left:20px;top:20px;width:54px;height:10px;background:linear-gradient(90deg,#fff,#d9d3bf)"></i><i style="left:30px;top:19px;width:28px;height:3px;background:#2a1a10"></i></div><p>64</p></div>
<div class="c"><div class="t wh"><i class="bt"></i><i style="left:3px;top:3px;width:19px;height:24px;background:repeating-linear-gradient(90deg,#d9a86a 0 5px,#c29a4a 5px 6px,#b48a5a 6px 7px)"></i><i style="left:6px;top:3px;width:14px;height:5px;background:repeating-linear-gradient(90deg,#2a1a10 0 2px,transparent 2px 6px)"></i><b style="left:28px;top:10px;font-size:7px;font-family:'Liberation Serif',serif;color:#555">1</b><b style="left:37px;top:10px;font-size:6px;color:#888">·</b></div><p>65</p></div>
<div class="c"><div class="t wh"><i class="bt"></i><i style="left:3px;top:3px;width:19px;height:24px;background:repeating-linear-gradient(90deg,#d9a86a 0 5px,#c29a4a 5px 6px,#b48a5a 6px 7px)"></i><i style="left:6px;top:3px;width:14px;height:5px;background:repeating-linear-gradient(90deg,#2a1a10 0 2px,transparent 2px 6px)"></i><b style="left:28px;top:10px;font-size:7px;font-family:'Liberation Serif',serif;color:#555">1 · 200 000</b></div><p>66</p></div>
<div class="c"><div class="t wh"><i class="bt"></i><i style="left:3px;top:3px;width:19px;height:24px;background:repeating-linear-gradient(90deg,#d9a86a 0 5px,#c29a4a 5px 6px,#b48a5a 6px 7px)"></i><i style="left:6px;top:3px;width:14px;height:5px;background:repeating-linear-gradient(90deg,#2a1a10 0 2px,transparent 2px 6px)"></i><b style="left:27px;top:11px;font-size:6.500px;font-family:'Liberation Serif',serif;color:#555">1 · 600 000</b><i class="b" style="left:62px;top:9px;width:5px;height:18px"></i></div><p>67</p></div>
<div class="c"><div class="t wh"><i class="bt"></i><i style="left:3px;top:3px;width:19px;height:24px;background:repeating-linear-gradient(90deg,#d9a86a 0 5px,#c29a4a 5px 6px,#b48a5a 6px 7px)"></i><i style="left:6px;top:3px;width:14px;height:5px;background:repeating-linear-gradient(90deg,#2a1a10 0 2px,transparent 2px 6px)"></i><b style="left:25px;top:11px;font-size:6.500px;font-family:'Liberation Serif',serif;color:#555">1 · 1 200 000</b><i class="b" style="left:62px;top:7px;width:5px;height:20px;background:linear-gradient(#2a2a10 0 25%,#c5b025 25%)"></i></div><p>68</p></div>
<div class="c"><div class="t" style="background:linear-gradient(100deg,#3a2a1a,#6a5020 35%,#2a1e14 60%,#4a3a2a)"><i style="left:20px;top:3px;width:24px;height:20px;background:#1a120c;transform:rotate(-14deg)"></i><i style="left:26px;top:8px;width:6px;height:11px;background:#ddd;transform:rotate(-14deg)"></i><i style="left:34px;top:6px;width:6px;height:11px;background:#ddd;transform:rotate(-14deg)"></i><i style="left:52px;top:8px;width:10px;height:14px;background:#d4d8e0;transform:rotate(30deg)"></i></div><p>69</p></div>
<div class="c"><div class="t" style="background:linear-gradient(90deg,#8a8880,#4a4a44 25%,#9a968a 45%,#3a3a34 70%,#8a887e)"><i style="left:15px;top:2px;width:10px;height:16px;background:#b4aca0;border-radius:40%"></i><i style="left:8px;top:20px;width:40px;height:6px;background:repeating-linear-gradient(#e6e6e0 0 1px,transparent 1px 2.500px)"></i><i style="left:42px;top:5px;width:18px;height:14px;background:#b8b8b0"></i></div><p>70</p></div>
<div class="c"><div class="t wh"><i class="bt"></i><i style="left:9px;top:2px;width:55px;height:1.500px;background:#c6b670"></i><i class="b" style="left:11px;top:8px;height:18px;background:linear-gradient(#333 0 25%,#a5a040 25%)"></i><i style="left:17px;top:5px;width:7px;height:21px;background:#bbb"></i><i class="b" style="left:30px;top:8px;height:18px;background:linear-gradient(#333 0 25%,#a5a040 25%)"></i><i style="left:36px;top:5px;width:7px;height:21px;background:#9eb0c0"></i><i class="b" style="left:50px;top:8px;height:18px;background:linear-gradient(#333 0 25%,#a5a040 25%)"></i><i style="left:56px;top:5px;width:7px;height:21px;background:#aaa"></i></div><p>71</p></div>
<div class="c"><div class="t" style="background:linear-gradient(90deg,#0e1208,#26301a 40%,#1a2412)"><i class="b" style="left:14px;top:14px;height:16px;width:4px;background:#c9a84a"></i><i class="b" style="left:23px;top:13px;height:17px;width:4px;background:#6a8030"></i><i class="b" style="left:38px;top:10px;height:20px;width:5px;background:linear-gradient(#3a2a1a 0 20%,#dcb65a 20%)"></i><i class="b" style="left:47px;top:12px;height:18px;width:4px;background:linear-gradient(#3a2a1a 0 20%,#d9803a 20%)"></i><i class="b" style="left:55px;top:14px;height:16px;width:4px;background:linear-gradient(#3a2a1a 0 20%,#e0a0a0 20%)"></i></div><p>72</p></div>
</div>
<div id="sb">
<span class="a" style="left:1036px;top:6px;width:5px;height:1px;background:#666"></span>
<span class="a" style="left:1047px;top:6px;width:60px;height:1px;background:#999"></span>
<span class="a" style="left:1056px;top:3px;width:6px;height:6px;border-radius:50%;background:#fff;box-shadow:0 0 1px #888"></span>
<span class="a" style="left:1113px;top:6px;width:5px;height:1px;background:#666"></span><span class="a" style="left:1115px;top:4px;width:1px;height:5px;background:#666"></span>
</div>
</div>
</body></html>
